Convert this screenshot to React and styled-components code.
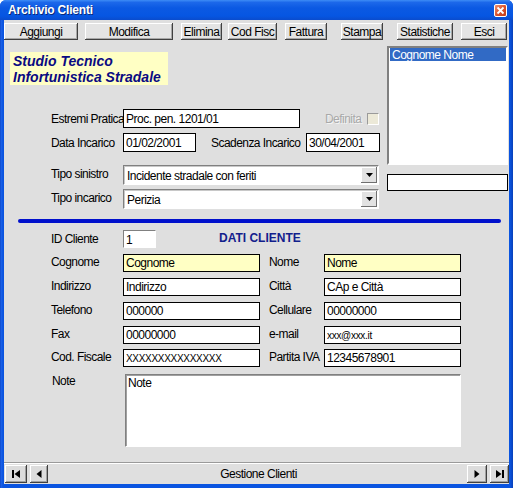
import React from 'react';
import styled, { createGlobalStyle } from 'styled-components';

const FONT = `"Liberation Sans", Arial, sans-serif`;

const GlobalStyle = createGlobalStyle`
  html, body { margin: 0; padding: 0; background: #fff; }
  body { font-family: ${FONT}; }
  * { box-sizing: border-box; }
`;

const toolButtons = [
  { label: 'Aggiungi', w: 74, ml: 0 },
  { label: 'Modifica', w: 88, ml: 7 },
  { label: 'Elimina', w: 41, ml: 8 },
  { label: 'Cod Fisc', w: 49, ml: 6 },
  { label: 'Fattura', w: 42, ml: 8 },
  { label: 'Stampa', w: 42, ml: 14 },
  { label: 'Statistiche', w: 56, ml: 14 },
  { label: 'Esci', w: 46, ml: 8 },
];

const clientRows = [
  { l1: 'Cognome', v1: 'Cognome', l2: 'Nome', v2: 'Nome', yellow: true, mt: 6 },
  { l1: 'Indirizzo', v1: 'Indirizzo', l2: 'Città', v2: 'CAp e Città', mt: 6 },
  { l1: 'Telefono', v1: '000000', l2: 'Cellulare', v2: '00000000', mt: 6 },
  { l1: 'Fax', v1: '00000000', l2: 'e-mail', v2: 'xxx@xxx.it', small2: true, mt: 6 },
  { l1: 'Cod. Fiscale', v1: 'XXXXXXXXXXXXXXX', small1: true, l2: 'Partita IVA', v2: '12345678901', mt: 5 },
];

const Arrow = () => (
  <svg width="7" height="4" viewBox="0 0 7 4"><path d="M0 0 H7 L3.5 4 Z" fill="#000" /></svg>
);

const App = () => {
  return (
    <>
      <GlobalStyle />
      <Window>
        <TitleBar>
          <Title>Archivio Clienti</Title>
          <CloseButton>
            <svg width="9" height="9" viewBox="0 0 9 9">
              <path d="M1.5 1.5 L7.5 7.5 M7.5 1.5 L1.5 7.5" stroke="#fff" strokeWidth="1.8" />
            </svg>
          </CloseButton>
        </TitleBar>
        <Body>
          <Toolbar>
            {toolButtons.map((b) => (
              <ToolButton key={b.label} $w={b.w} $ml={b.ml}>{b.label}</ToolButton>
            ))}
          </Toolbar>

          <TopSection>
            <LeftPane>
              <Logo>
                <LogoLine>Studio Tecnico</LogoLine>
                <LogoLine>Infortunistica Stradale</LogoLine>
              </Logo>

              <Row $h={19} $mt={24}>
                <Label $w={72}>Estremi Pratica</Label>
                <Field $w={177} $h={19} defaultValue="Proc. pen. 1201/01" readOnly />
                <Label $ml={25} $disabled>Definita</Label>
                <CheckBox />
              </Row>
              <Row $h={19} $mt={5}>
                <Label $w={72}>Data Incarico</Label>
                <Field $w={73} $h={19} defaultValue="01/02/2001" readOnly />
                <Label $w={95} $ml={15}>Scadenza Incarico</Label>
                <Field $w={74} $h={19} defaultValue="30/04/2001" readOnly />
              </Row>
              <Row $h={20} $mt={13}>
                <Label $w={72} $up>Tipo sinistro</Label>
                <Combo>
                  <ComboText>Incidente stradale con feriti</ComboText>
                  <ComboArrow><Arrow /></ComboArrow>
                </Combo>
              </Row>
              <Row $h={20} $mt={4}>
                <Label $w={72} $up>Tipo incarico</Label>
                <Combo>
                  <ComboText>Perizia</ComboText>
                  <ComboArrow><Arrow /></ComboArrow>
                </Combo>
              </Row>
            </LeftPane>

            <RightPane>
              <ListBox>
                <ListItem $selected>Cognome Nome</ListItem>
              </ListBox>
              <SearchBox defaultValue="" readOnly />
            </RightPane>
          </TopSection>

          <Divider />

          <Row $h={18} $mt={7}>
            <Label $w={72}>ID Cliente</Label>
            <SunkenField $w={33} defaultValue="1" readOnly />
            <SectionTitle>DATI CLIENTE</SectionTitle>
          </Row>

          {clientRows.map((r) => (
            <Row key={r.l1} $h={18} $mt={r.mt}>
              <Label $w={72} $up>{r.l1}</Label>
              <Field $w={137} $yellow={r.yellow} $small={r.small1} defaultValue={r.v1} readOnly />
              <Label $w={55} $ml={9} $up>{r.l2}</Label>
              <Field $w={137} $yellow={r.yellow} $small={r.small2} defaultValue={r.v2} readOnly />
            </Row>
          ))}

          <NoteRow>
            <Label $w={73}>Note</Label>
            <NoteArea defaultValue="Note" readOnly />
          </NoteRow>

          <NavBar>
            <NavButton $w={22} $ml={1}>
              <svg width="10" height="10" viewBox="0 0 10 10"><path d="M1 1 H3 V9 H1 Z M9 1 V9 L3.5 5 Z" fill="#000" /></svg>
            </NavButton>
            <NavButton $w={18} $ml={3}>
              <svg width="6" height="10" viewBox="0 0 6 10"><path d="M5.5 1 V9 L0.5 5 Z" fill="#000" /></svg>
            </NavButton>
            <NavCaption>Gestione Clienti</NavCaption>
            <NavButton $w={20}>
              <svg width="6" height="10" viewBox="0 0 6 10"><path d="M0.5 1 V9 L5.5 5 Z" fill="#000" /></svg>
            </NavButton>
            <NavButton $w={19} $ml={3}>
              <svg width="10" height="10" viewBox="0 0 10 10"><path d="M1 1 V9 L6.5 5 Z M7 1 H9 V9 H7 Z" fill="#000" /></svg>
            </NavButton>
          </NavBar>
        </Body>
      </Window>
    </>
  );
};

const Window = styled.div`
  width: 513px;
  height: 488px;
  display: flex;
  flex-direction: column;
  background: linear-gradient(90deg, #0a3fc0 0, #1e63e8 1px, #0a54e0 3px, #0a54e0 calc(100% - 3px), #0840b8 100%);
  border-radius: 6px 6px 0 0;
  overflow: hidden;
`;

const TitleBar = styled.div`
  height: 20px;
  display: flex;
  align-items: center;
  padding: 0 6px 0 8px;
  background: linear-gradient(180deg, #3d8cf6 0%, #1c68ea 12%, #0b59e3 40%, #0656e2 80%, #0a4ccd 100%);
`;

const Title = styled.span`
  color: #fff;
  font: bold 12px ${FONT};
  letter-spacing: -0.2px;
  text-shadow: 1px 1px 0 #0b2a7a;
`;

const CloseButton = styled.div`
  margin-left: auto;
  width: 13px;
  height: 13px;
  display: flex;
  align-items: center;
  justify-content: center;
  border: 1px solid #fff;
  border-radius: 2px;
  background: linear-gradient(135deg, #f09070, #d8502a 55%, #c03c18);
`;

const Body = styled.div`
  flex: 1;
  margin: 0 4px 4px;
  background: #dfdfdf;
  display: flex;
  flex-direction: column;
  font-size: 12px;
`;

const Toolbar = styled.div`
  display: flex;
  padding-top: 3px;
  height: 20px;
`;

const ToolButton = styled.button`
  width: ${(p) => p.$w}px;
  margin-left: ${(p) => p.$ml}px;
  height: 17px;
  padding: 0;
  border: none;
  background: #e4e4e4;
  box-shadow: inset -1px -1px 0 #404040, inset 1px 1px 0 #ffffff, inset -2px -2px 0 #a8a8a8;
  font: 12px ${FONT};
  letter-spacing: -0.5px;
  white-space: nowrap;
  color: #000;
  flex-shrink: 0;
`;

const TopSection = styled.div`
  display: flex;
`;

const LeftPane = styled.div`
  width: 380px;
  display: flex;
  flex-direction: column;
`;

const Logo = styled.div`
  width: 158px;
  height: 33px;
  margin: 12px 0 0 6px;
  padding: 1px 0 0 3px;
  background: #ffffc4;
`;

const LogoLine = styled.div`
  font: italic bold 14px ${FONT};
  line-height: 16px;
  color: #0a0a82;
  white-space: nowrap;
`;

const Row = styled.div`
  display: flex;
  align-items: center;
  height: ${(p) => p.$h}px;
  margin-top: ${(p) => p.$mt}px;
  padding-left: 47px;
`;

const Label = styled.span`
  width: ${(p) => (p.$w ? `${p.$w}px` : 'auto')};
  margin-left: ${(p) => p.$ml || 0}px;
  margin-top: ${(p) => (p.$up ? '-3px' : '0')};
  flex-shrink: 0;
  white-space: nowrap;
  font: 12px ${FONT};
  letter-spacing: -0.55px;
  color: ${(p) => (p.$disabled ? '#a9a9a9' : '#000')};
  text-shadow: ${(p) => (p.$disabled ? '1px 1px 0 #f4f4f4' : 'none')};
`;

const Field = styled.input`
  width: ${(p) => p.$w}px;
  height: ${(p) => p.$h || 18}px;
  flex-shrink: 0;
  margin: 0;
  padding: 0 0 0 2px;
  border: 1px solid #000;
  background: ${(p) => (p.$yellow ? '#ffffc4' : '#fff')};
  font: ${(p) => (p.$small ? '10px' : '12px')} ${FONT};
  letter-spacing: ${(p) => (p.$small ? '-0.3px' : '-0.5px')};
  color: #000;
  outline: none;
`;

const SearchBox = styled(Field)`
  width: 121px;
  height: 17px;
  margin-top: 9px;
`;

const SunkenField = styled.input`
  width: ${(p) => p.$w}px;
  height: 18px;
  margin: 0;
  padding: 1px 0 0 2px;
  border: 1px solid;
  border-color: #808080 #ffffff #ffffff #808080;
  background: #fff;
  font: 12px ${FONT};
  color: #000;
  outline: none;
`;

const CheckBox = styled.span`
  width: 12px;
  height: 12px;
  margin-left: 6px;
  border: 1px solid;
  border-color: #9a9a9a #ffffff #ffffff #9a9a9a;
  background: #ece9d8;
`;

const Combo = styled.div`
  width: 256px;
  height: 20px;
  display: flex;
  align-items: center;
  border: 1px solid;
  border-color: #808080 #ffffff #ffffff #808080;
  box-shadow: inset 1px 1px 0 #c8c8c8;
  background: #fff;
  padding: 0 1px 0 3px;
`;

const ComboText = styled.span`
  flex: 1;
  font: 12px ${FONT};
  letter-spacing: -0.5px;
  padding-top: 1px;
`;

const ComboArrow = styled.span`
  width: 16px;
  height: 16px;
  display: flex;
  align-items: center;
  justify-content: center;
  background: #e2e2e2;
  box-shadow: inset -1px -1px 0 #707070, inset 1px 1px 0 #ffffff;
`;

const RightPane = styled.div`
  width: 121px;
  margin: 6px 1px 0 auto;
  display: flex;
  flex-direction: column;
`;

const ListBox = styled.div`
  height: 119px;
  border: 2px solid;
  border-color: #808080 #ffffff #ffffff #808080;
  background: #fff;
  padding: 0 0 0 1px;
`;

const ListItem = styled.div`
  height: 13px;
  line-height: 13px;
  padding-left: 2px;
  font: 12px ${FONT};
  letter-spacing: -0.5px;
  background: ${(p) => (p.$selected ? '#316ac5' : 'transparent')};
  color: ${(p) => (p.$selected ? '#fff' : '#000')};
`;

const Divider = styled.div`
  width: 483px;
  height: 4px;
  margin: 10px 0 0 14px;
  border-radius: 2px;
  background: #0010cc;
`;

const SectionTitle = styled.span`
  margin-left: 63px;
  margin-top: -2px;
  font: bold 12px ${FONT};
  color: #12208c;
`;

const NoteRow = styled.div`
  display: flex;
  align-items: flex-start;
  margin-top: 7px;
  padding-left: 48px;
`;

const NoteArea = styled.textarea`
  width: 336px;
  height: 73px;
  margin: 0;
  padding: 1px 2px;
  resize: none;
  border: 1px solid;
  border-color: #808080 #ffffff #ffffff #808080;
  box-shadow: inset 1px 1px 0 #a0a0a0;
  background: #fff;
  font: 12px ${FONT};
  letter-spacing: -0.5px;
  color: #000;
  outline: none;
`;

const NavBar = styled.div`
  margin-top: auto;
  height: 22px;
  display: flex;
  align-items: center;
  border-top: 1px solid #9a9a9a;
  box-shadow: inset 0 1px 0 #ffffff;
`;

const NavButton = styled.div`
  width: ${(p) => p.$w}px;
  height: 18px;
  margin-left: ${(p) => p.$ml || 0}px;
  display: flex;
  align-items: center;
  justify-content: center;
  background: #dcdcdc;
  box-shadow: inset -1px -1px 0 #404040, inset 1px 1px 0 #ffffff, inset -2px -2px 0 #a0a0a0;
  flex-shrink: 0;
`;

const NavCaption = styled.span`
  flex: 1;
  text-align: center;
  font: 12px ${FONT};
  letter-spacing: -0.5px;
  color: #000;
  padding-left: 2px;
`;

export default App;
